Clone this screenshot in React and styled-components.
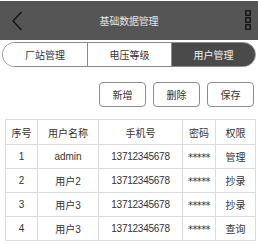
import React from "react";
import styled, { createGlobalStyle } from "styled-components";

const Global = createGlobalStyle`
  html, body { margin: 0; padding: 0; background: #fff; }
  body { font-family: "Liberation Sans", "Noto Sans CJK SC", sans-serif; }
`;

const Page = styled.div`
  width: 258px;
  height: 244px;
  padding-top: 1px;
  box-sizing: border-box;
  display: flex;
  flex-direction: column;
`;

const Header = styled.div`
  height: 39px;
  background: #555555;
  display: grid;
  grid-template-columns: 40px 1fr 40px;
  align-items: center;
`;

const Title = styled.div`
  text-align: center;
  color: #e6e6e6;
  font-size: 10px;
  letter-spacing: -0.2px;
`;

const IconCell = styled.div`
  display: flex;
  align-items: center;
  justify-content: ${(p) => p.$align};
  padding: 0 ${(p) => p.$pad}px;
`;

const Tabs = styled.div`
  margin: 2px 2px 0;
  height: 25px;
  box-sizing: border-box;
  border: 1px solid #8a8a8a;
  border-radius: 13px;
  overflow: hidden;
  display: grid;
  grid-template-columns: 1fr 1fr 1fr;
`;

const Tab = styled.div`
  display: flex;
  align-items: center;
  justify-content: center;
  font-size: 10px;
  color: ${(p) => (p.$active ? "#f2f2f2" : "#333")};
  background: ${(p) => (p.$active ? "#4a4a4a" : "#fff")};
  border-left: ${(p) => (p.$first ? "none" : "1px solid #8a8a8a")};
`;

const Toolbar = styled.div`
  display: flex;
  justify-content: flex-end;
  gap: 7px;
  padding: 15px 4px 0 0;
`;

const Button = styled.div`
  width: 47px;
  height: 25px;
  box-sizing: border-box;
  border: 1px solid #8c8c8c;
  border-radius: 4px;
  display: flex;
  align-items: center;
  justify-content: center;
  font-size: 10px;
  color: #333;
  background: #fff;
`;

const Table = styled.table`
  margin: 12px 0 0 5px;
  width: 250px;
  border-collapse: collapse;
  table-layout: fixed;
`;

const Th = styled.th`
  font-weight: normal;
  font-size: 10px;
  color: #333;
  height: 24px;
  padding: 0;
  border: 1px solid #dcdcdc;
  text-align: center;
`;

const Td = styled.td`
  font-size: 10px;
  color: #333;
  height: 23px;
  padding: 0;
  border: 1px solid #dcdcdc;
  text-align: center;
  letter-spacing: ${(p) => (p.$tight ? "-0.25px" : "0")};
`;

const Stars = styled.span`
  font-family: "DejaVu Sans", sans-serif;
  font-size: 10px;
  letter-spacing: -0.6px;
  vertical-align: -2px;
`;

const rows = [
  ["1", "admin", "13712345678", "管理"],
  ["2", "用户2", "13712345678", "抄录"],
  ["3", "用户3", "13712345678", "抄录"],
  ["4", "用户3", "13712345678", "查询"],
];

export default function App() {
  return (
    <>
      <Global />
      <Page>
        <Header>
          <IconCell $align="flex-start" $pad={11}>
            <svg width="12" height="20" viewBox="0 0 12 20">
              <path d="M10.5 1 L2 10 L10.5 19" fill="none" stroke="#111" strokeWidth="1.3" />
            </svg>
          </IconCell>
          <Title>基础数据管理</Title>
          <IconCell $align="flex-end" $pad={7}>
            <svg width="6" height="21" viewBox="0 0 6 21">
              {[0, 7, 14].map((y) => (
                <rect key={y} x="0.75" y={y + 0.75} width="4.5" height="4.5" fill="#555" stroke="#111" strokeWidth="1.3" />
              ))}
            </svg>
          </IconCell>
        </Header>
        <Tabs>
          <Tab $first>厂站管理</Tab>
          <Tab>电压等级</Tab>
          <Tab $active>用户管理</Tab>
        </Tabs>
        <Toolbar>
          <Button>新增</Button>
          <Button>删除</Button>
          <Button>保存</Button>
        </Toolbar>
        <Table>
          <colgroup>
            <col style={{ width: 32 }} />
            <col style={{ width: 61 }} />
            <col style={{ width: 84 }} />
            <col style={{ width: 33 }} />
            <col style={{ width: 40 }} />
          </colgroup>
          <thead>
            <tr>
              <Th>序号</Th>
              <Th>用户名称</Th>
              <Th>手机号</Th>
              <Th>密码</Th>
              <Th>权限</Th>
            </tr>
          </thead>
          <tbody>
            {rows.map((r) => (
              <tr key={r[0]}>
                <Td>{r[0]}</Td>
                <Td>{r[1]}</Td>
                <Td $tight>{r[2]}</Td>
                <Td><Stars>*****</Stars></Td>
                <Td>{r[3]}</Td>
              </tr>
            ))}
          </tbody>
        </Table>
      </Page>
    </>
  );
}
